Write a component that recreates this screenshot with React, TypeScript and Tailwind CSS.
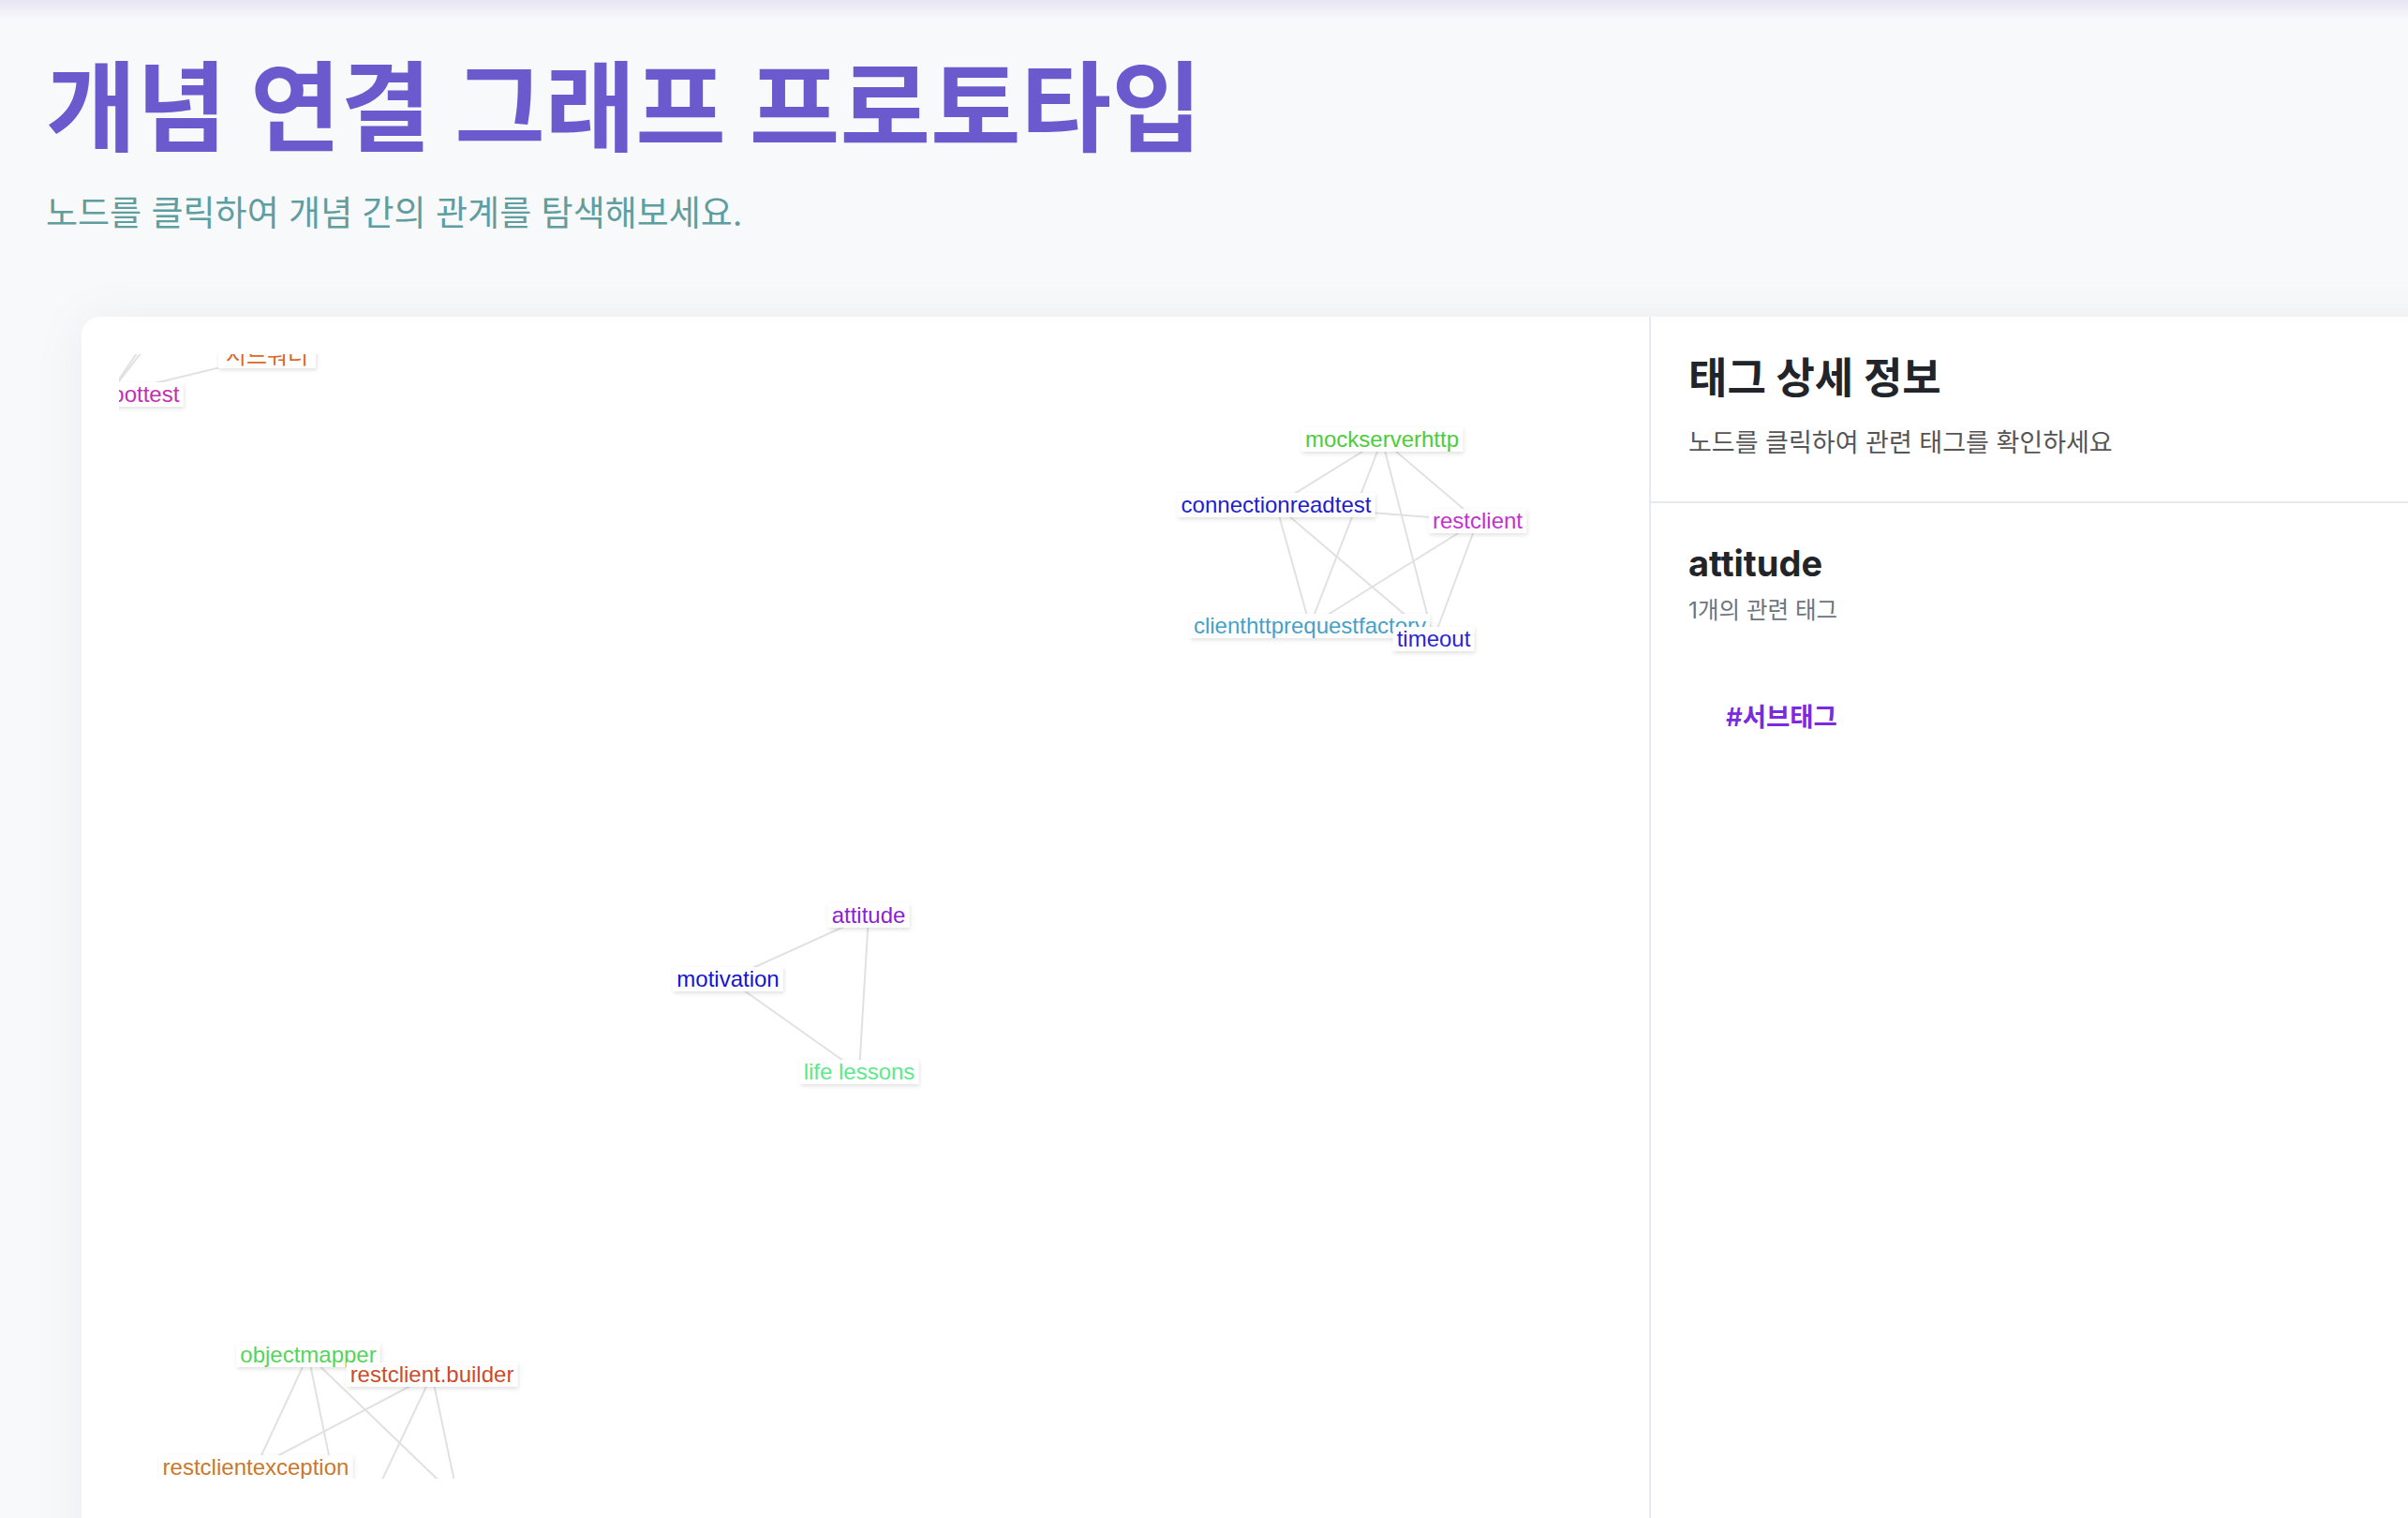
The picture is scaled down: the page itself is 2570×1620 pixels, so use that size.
type GraphNode = { id: string; label: string; x: number; y: number; color: string }

// node positions are page pixels; the svg viewBox starts at the canvas origin
const nodes: GraphNode[] = [
  { id: 'h1', label: 'junit', x: 178, y: 330, color: '#3a8fd0' },
  { id: 'h2', label: 'mockito', x: 196, y: 318, color: '#40b050' },
  { id: 'sd', label: '서드워너', x: 285, y: 380, color: '#d8692b' },
  { id: 'sb', label: 'springboottest', x: 116, y: 421, color: '#c22fb2' },

  { id: 'mock', label: 'mockserverhttp', x: 1475, y: 469, color: '#4ccc3c' },
  { id: 'conn', label: 'connectionreadtest', x: 1362, y: 539, color: '#1c1cd0' },
  { id: 'rest', label: 'restclient', x: 1577, y: 556, color: '#c431cf' },
  { id: 'chttp', label: 'clienthttprequestfactory', x: 1398, y: 668, color: '#48a0c8' },
  { id: 'timeout', label: 'timeout', x: 1530, y: 682, color: '#2a25d8' },

  { id: 'att', label: 'attitude', x: 927, y: 977, color: '#8c1fd6' },
  { id: 'mot', label: 'motivation', x: 777, y: 1045, color: '#1414d4' },
  { id: 'life', label: 'life lessons', x: 917, y: 1144, color: '#5de88d' },

  { id: 'hA', label: 'jackson', x: 372, y: 1655, color: '#999999' },
  { id: 'hB', label: 'httpclient', x: 489, y: 1600, color: '#999999' },
  { id: 'rexc', label: 'restclientexception', x: 273, y: 1566, color: '#c8792c' },
  { id: 'objm', label: 'objectmapper', x: 329, y: 1446, color: '#55d45a' },
  { id: 'rbuild', label: 'restclient.builder', x: 461, y: 1467, color: '#cc4b2c' },
]

const edges: [string, string][] = [
  ['sb', 'sd'],
  ['sb', 'h1'],
  ['sb', 'h2'],
  ['mock', 'conn'],
  ['mock', 'rest'],
  ['mock', 'chttp'],
  ['mock', 'timeout'],
  ['conn', 'rest'],
  ['conn', 'chttp'],
  ['conn', 'timeout'],
  ['rest', 'chttp'],
  ['rest', 'timeout'],
  ['chttp', 'timeout'],
  ['att', 'mot'],
  ['mot', 'life'],
  ['att', 'life'],
  ['objm', 'rexc'],
  ['objm', 'hA'],
  ['objm', 'hB'],
  ['rbuild', 'rexc'],
  ['rbuild', 'hA'],
  ['rbuild', 'hB'],
]

// Arial-width table, 24px labels
const charW: Record<string, number> = {
  a: 0.556, b: 0.556, c: 0.5, d: 0.556, e: 0.556, f: 0.278, g: 0.556, h: 0.556,
  i: 0.222, j: 0.222, k: 0.5, l: 0.222, m: 0.833, n: 0.556, o: 0.556, p: 0.556,
  q: 0.556, r: 0.333, s: 0.5, t: 0.278, u: 0.556, v: 0.5, w: 0.722, x: 0.5,
  y: 0.5, z: 0.5, '.': 0.278, ' ': 0.278,
}

function textWidth(s: string, size = 24) {
  let w = 0
  for (const ch of s) w += ch.charCodeAt(0) > 0x3000 ? 1 : charW[ch] ?? 0.556
  return w * size
}

const byId = Object.fromEntries(nodes.map((n) => [n.id, n]))

function ConceptGraph() {
  return (
    <svg width={1593} height={1200} viewBox="127 378 1593 1200">
      <defs>
        <filter id="labelShadow" x="-10%" y="-30%" width="120%" height="170%">
          <feDropShadow dx="1" dy="2" stdDeviation="2" floodColor="#000" floodOpacity="0.12" />
        </filter>
      </defs>
      {edges.map(([a, b]) => (
        <line
          key={a + b}
          x1={byId[a].x}
          y1={byId[a].y}
          x2={byId[b].x}
          y2={byId[b].y}
          stroke="#e1e1e1"
          strokeWidth={2}
        />
      ))}
      {nodes.map((n) => {
        const w = textWidth(n.label)
        return (
          <g key={n.id}>
            <rect
              x={n.x - w / 2 - 4}
              y={n.y - 13}
              width={w + 8}
              height={26}
              fill="#fff"
              filter="url(#labelShadow)"
            />
            <text
              x={n.x}
              y={n.y + 8}
              textAnchor="middle"
              fontSize={24}
              fill={n.color}
              fontFamily="'Liberation Sans', 'Noto Sans CJK KR', Arial, sans-serif"
            >
              {n.label}
            </text>
          </g>
        )
      })}
    </svg>
  )
}

export default function App() {
  return (
    <div className="relative h-[1620px] w-full overflow-hidden bg-[#f8f9fb] font-['Inter','Noto_Sans_CJK_KR',sans-serif]">
      {/* faint tint under the browser chrome */}
      <div className="pointer-events-none absolute inset-x-0 top-0 h-[22px] bg-gradient-to-b from-[#e8e5f3] to-[#f8f9fb]/0" />

      <header className="pl-[49px] pt-[55px]">
        <h1 className="text-[105px] font-bold leading-[120px] text-[#6a5acd]">개념 연결 그래프 프로토타입</h1>
        <p className="mt-[29px] text-[37px] leading-[48px] text-[#5f9ea0]">
          노드를 클릭하여 개념 간의 관계를 탐색해보세요.
        </p>
      </header>

      <main className="ml-[87px] mt-[86px] flex w-max rounded-[20px] bg-white shadow-[0_4px_60px_rgba(0,0,0,0.06)]">
        <section className="p-[40px] pb-[90px]">
          <ConceptGraph />
        </section>

        <aside className="w-[900px] border-l-2 border-[#e6eaf0]">
          <div className="border-b-2 border-[#e6eaf0] px-[40px] pb-[42px] pt-[38px]">
            <h2 className="text-[45px] font-bold leading-[56px] text-[#212529]">태그 상세 정보</h2>
            <p className="mt-[21px] text-[27px] leading-[40px] text-[#555]">노드를 클릭하여 관련 태그를 확인하세요</p>
          </div>
          <div className="px-[40px] pt-[39px]">
            <h3 className="text-[38px] font-bold leading-[50px] text-[#212529]">attitude</h3>
            <p className="mt-[9px] text-[24.5px] leading-[32px] text-[#6c757d]">1개의 관련 태그</p>
            <ul className="mt-[80px] pl-[40px]">
              <li className="text-[27.5px] font-semibold leading-[36px] text-[#7a2be0]">#서브태그</li>
            </ul>
          </div>
        </aside>
      </main>
    </div>
  )
}
